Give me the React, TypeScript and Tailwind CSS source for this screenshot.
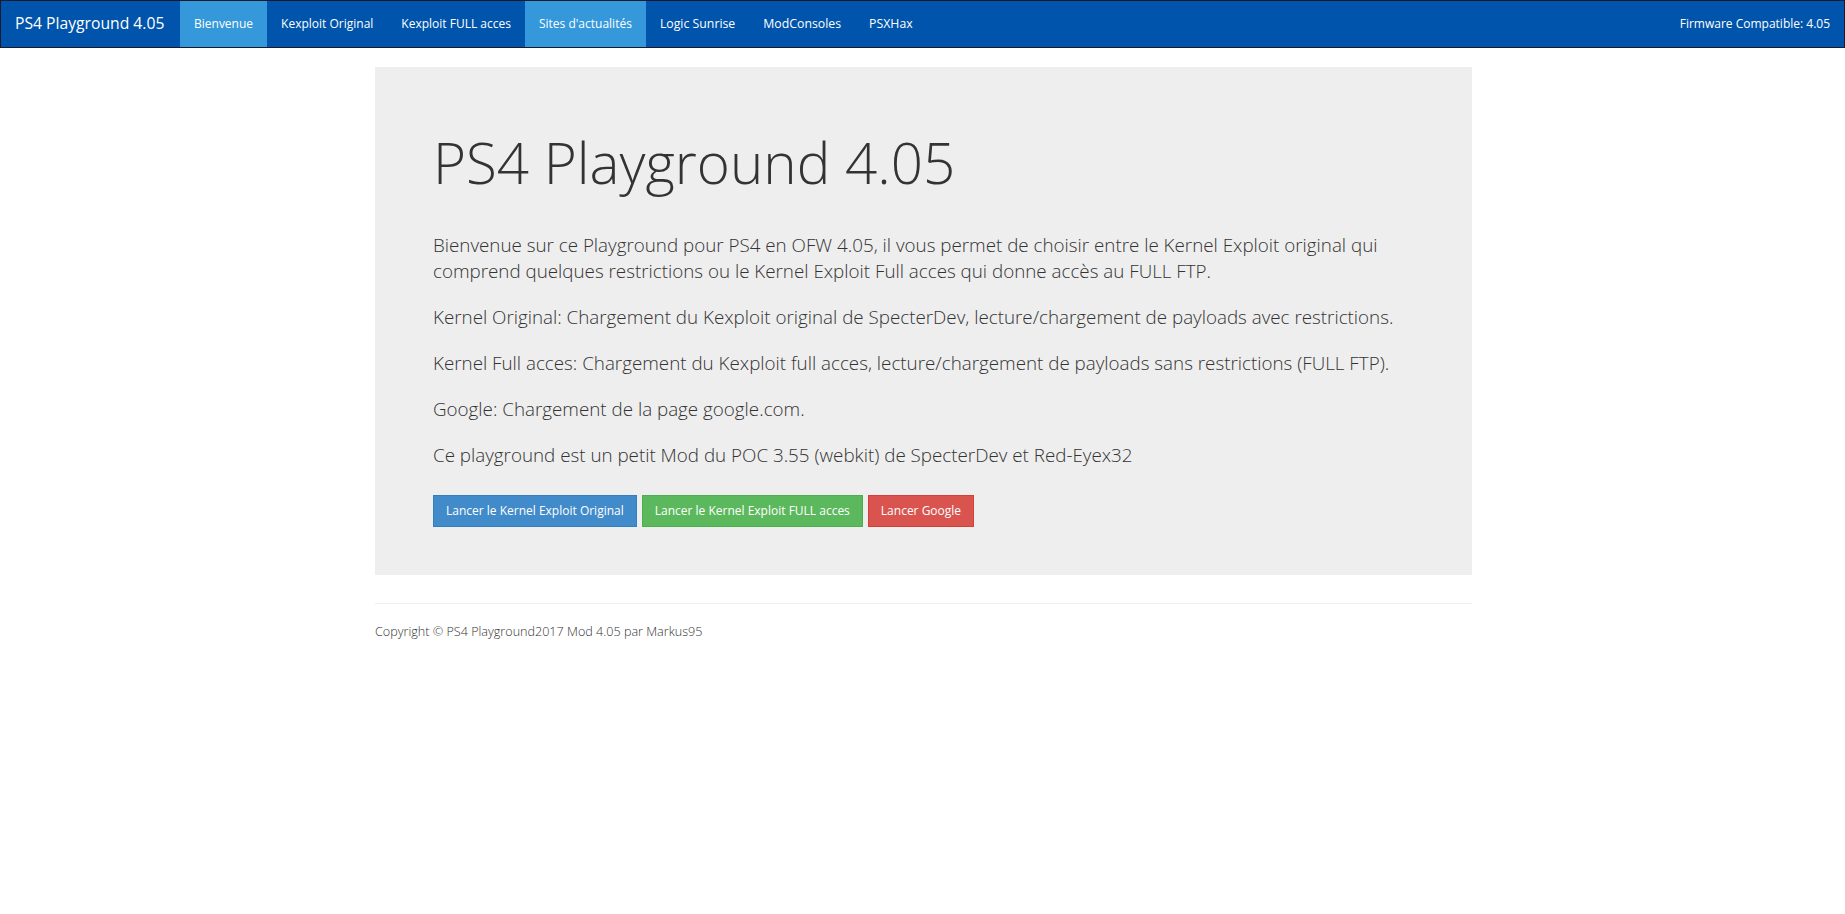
// PS4 Playground 4.05 landing page
const NAV_LINKS = [
  { label: "Bienvenue", cls: "bg-[#3498db] text-[12px]" },
  { label: "Kexploit Original", cls: "text-[12px]" },
  { label: "Kexploit FULL acces", cls: "text-[12px]" },
  { label: "Sites d'actualités", cls: "bg-[#3498db] text-[12px]" },
  { label: "Logic Sunrise", cls: "text-[12.3px]" },
  { label: "ModConsoles", cls: "text-[12.3px]" },
  { label: "PSXHax", cls: "text-[12.3px]" },
];

const PARAGRAPHS = [
  "Bienvenue sur ce Playground pour PS4 en OFW 4.05, il vous permet de choisir entre le Kernel Exploit original qui comprend quelques restrictions ou le Kernel Exploit Full acces qui donne accès au FULL FTP.",
  "Kernel Original: Chargement du Kexploit original de SpecterDev, lecture/chargement de payloads avec restrictions.",
  "Kernel Full acces: Chargement du Kexploit full acces, lecture/chargement de payloads sans restrictions (FULL FTP).",
  "Google: Chargement de la page google.com.",
  "Ce playground est un petit Mod du POC 3.55 (webkit) de SpecterDev et Red-Eyex32",
];

const BUTTONS = [
  { label: "Lancer le Kernel Exploit Original", cls: "bg-[#428bca] border-[#357ebd]" },
  { label: "Lancer le Kernel Exploit FULL acces", cls: "bg-[#5cb85c] border-[#4cae4c]" },
  { label: "Lancer Google", cls: "bg-[#d9534f] border-[#d43f3a]" },
];

export default function App() {
  return (
    <div className="min-h-[914px] bg-white font-['Open_Sans','Noto_Sans',sans-serif] font-light text-[#333]">
      {/* Navbar */}
      <nav className="h-[48px] flex items-stretch justify-between bg-[#0054ab] border border-[#1a1a2a] text-white">
        <div className="flex items-stretch">
          <a className="pl-[14px] pr-[15px] w-[179px] flex items-center text-[15.7px] font-normal">PS4 Playground 4.05</a>
          {NAV_LINKS.map((l) => (
            <a key={l.label} className={`px-[14px] flex items-center font-normal ${l.cls}`}>
              {l.label}
            </a>
          ))}
        </div>
        <div className="pr-[14px] flex items-center text-[12px] font-normal">Firmware Compatible: 4.05</div>
      </nav>

      {/* Main */}
      <main className="w-[1097px] ml-[375px] pt-[19px]">
        <section className="bg-[#eeeeee] h-[508px] px-[58px] pt-[63px]">
          <h1 className="text-[56.5px] leading-[66px] font-light">PS4 Playground 4.05</h1>
          <div className="mt-[36px] h-[243px] overflow-hidden">
            {PARAGRAPHS.map((p) => (
              <p key={p} className="text-[18.8px] leading-[26px] mb-[20px]">
                {p}
              </p>
            ))}
          </div>
          <div className="mt-[20px] flex gap-[5px]">
            {BUTTONS.map((b) => (
              <a
                key={b.label}
                className={`h-[32px] px-[12px] flex items-center border text-white text-[12px] font-normal ${b.cls}`}
              >
                {b.label}
              </a>
            ))}
          </div>
        </section>
        <footer className="mt-[28px] border-t border-[#eeeeee] pt-[18px] text-[12.6px] leading-[20px]">
          Copyright © PS4 Playground2017 Mod 4.05 par Markus95
        </footer>
      </main>
    </div>
  );
}
